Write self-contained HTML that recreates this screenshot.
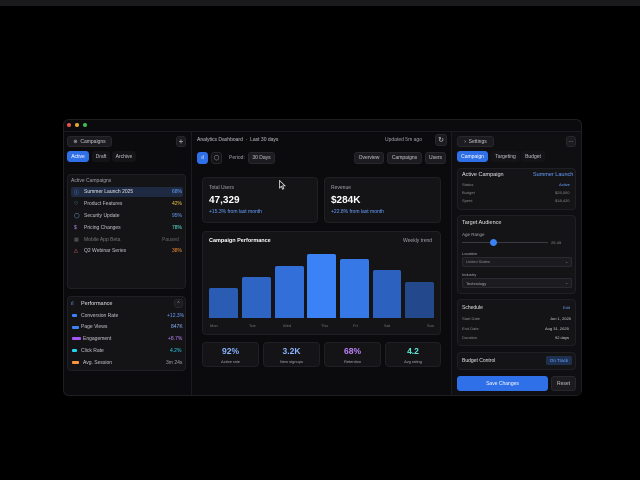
<!DOCTYPE html><html><head><style>
*{margin:0;padding:0;box-sizing:border-box}
body{width:640px;height:480px;background:#000;font-family:"Liberation Sans",sans-serif;color:#c4c4ca;position:relative;overflow:hidden;font-size:5px}
.a{position:absolute}
.win{left:63px;top:119px;width:519px;height:277px;background:#0b0b0d;border:1px solid #1f1f23;border-radius:6px;overflow:hidden}
.card{position:absolute;background:#141417;border:1px solid #1f1f24;border-radius:4px}
.btn{position:absolute;background:#1c1c20;border:1px solid #27272c;border-radius:3px;color:#c4c4ca;font-size:5px;display:flex;align-items:center;justify-content:center}
.blue{background:#2f6fe8;border-color:#2f6fe8;color:#fff}
.t{position:absolute;white-space:nowrap}
.bar{position:absolute;border-radius:2px 2px 0 0}
</style></head><body>
<div class="a" style="left:0;top:0;width:640px;height:6px;background:#1a1a1c"></div>
<div class="a win"></div>
<div class="a" style="left:64px;top:131px;width:517px;height:1px;background:#1c1c20"></div>
<div class="a" style="left:67px;top:123px;width:4px;height:4px;border-radius:50%;background:#e5534b"></div>
<div class="a" style="left:75px;top:123px;width:4px;height:4px;border-radius:50%;background:#e0a82e"></div>
<div class="a" style="left:83px;top:123px;width:4px;height:4px;border-radius:50%;background:#3fb950"></div>
<div class="a" style="left:191px;top:132px;width:1px;height:263px;background:#1c1c20"></div>
<div class="a" style="left:451px;top:132px;width:1px;height:263px;background:#1c1c20"></div>
<div class="a" style="left:452px;top:132px;width:129px;height:263px;background:#0f0f12"></div>

<!-- left -->
<div class="btn" style="left:67px;top:136px;width:45px;height:11px">⊛&nbsp; Campaigns</div>
<div class="btn" style="left:176px;top:136px;width:10px;height:11px;font-size:8px">+</div>
<div class="btn blue" style="left:67px;top:151px;width:22px;height:11px">Active</div>
<div class="btn" style="left:92px;top:151px;width:18px;height:11px;background:#141417;border-color:#141417">Draft</div>
<div class="btn" style="left:112px;top:151px;width:24px;height:11px;background:#141417;border-color:#141417">Archive</div>
<div class="card" style="left:67px;top:174px;width:119px;height:115px"></div>
<div class="t" style="left:71px;top:178px;color:#a1a1aa">Active Campaigns</div>
<div class="a" style="left:71px;top:187px;width:112px;height:10px;background:#1e2a42;border-radius:2px"></div>
<div class="t" style="left:74px;top:189px;color:#6aa0ff">ⓘ</div><div class="t" style="left:84px;top:189px;color:#e4e4e7">Summer Launch 2025</div><div class="t" style="left:172px;top:189px;color:#6aa0ff">68%</div>
<div class="t" style="left:74px;top:201px;color:#5eead4">♡</div><div class="t" style="left:84px;top:201px">Product Features</div><div class="t" style="left:172px;top:201px;color:#f5c542">42%</div>
<div class="t" style="left:74px;top:213px;color:#8ab4ff">◯</div><div class="t" style="left:84px;top:213px">Security Update</div><div class="t" style="left:172px;top:213px;color:#6aa0ff">95%</div>
<div class="t" style="left:74px;top:225px;color:#c084fc">$</div><div class="t" style="left:84px;top:225px">Pricing Changes</div><div class="t" style="left:172px;top:225px;color:#5eead4">78%</div>
<div class="t" style="left:74px;top:237px;color:#666">▦</div><div class="t" style="left:84px;top:237px;color:#777">Mobile App Beta</div><div class="t" style="left:162px;top:237px;color:#666">Paused</div>
<div class="t" style="left:74px;top:248px;color:#f87171">△</div><div class="t" style="left:84px;top:248px">Q2 Webinar Series</div><div class="t" style="left:172px;top:248px;color:#fb923c">38%</div>
<div class="card" style="left:67px;top:296px;width:119px;height:75px"></div>
<div class="t" style="left:71px;top:301px;color:#6aa0ff">ıl</div><div class="t" style="left:81px;top:301px;color:#e4e4e7;font-size:5.5px">Performance</div>
<div class="btn" style="left:174px;top:299px;width:9px;height:9px">⌃</div>
<div class="a" style="left:72px;top:314px;width:5px;height:3px;background:#3b82f6;border-radius:1px"></div><div class="t" style="left:81px;top:313px">Conversion Rate</div><div class="t" style="left:167px;top:313px;color:#6aa0ff">+12.3%</div>
<div class="a" style="left:72px;top:326px;width:7px;height:3px;background:#3b82f6;border-radius:1px"></div><div class="t" style="left:81px;top:324px">Page Views</div><div class="t" style="left:171px;top:324px;color:#8ab4ff">847K</div>
<div class="a" style="left:72px;top:337px;width:9px;height:3px;background:#a855f7;border-radius:1px"></div><div class="t" style="left:83px;top:336px">Engagement</div><div class="t" style="left:168px;top:336px;color:#c084fc">+8.7%</div>
<div class="a" style="left:72px;top:349px;width:5px;height:3px;background:#22d3ee;border-radius:1px"></div><div class="t" style="left:81px;top:348px">Click Rate</div><div class="t" style="left:170px;top:348px;color:#22d3ee">4.2%</div>
<div class="a" style="left:72px;top:361px;width:7px;height:3px;background:#fb923c;border-radius:1px"></div><div class="t" style="left:83px;top:360px">Avg. Session</div><div class="t" style="left:166px;top:360px;color:#a1a1aa">3m 24s</div>

<!-- center -->
<div class="t" style="left:197px;top:137px">Analytics Dashboard &nbsp;·&nbsp; Last 30 days</div>
<div class="t" style="left:385px;top:137px;color:#a1a1aa">Updated 5m ago</div>
<div class="btn" style="left:435px;top:134px;width:12px;height:12px;font-size:7px">↻</div>
<div class="btn blue" style="left:197px;top:152px;width:11px;height:12px">ıl</div>
<div class="btn" style="left:211px;top:152px;width:11px;height:12px;background:#141417">◯</div>
<div class="t" style="left:229px;top:155px;color:#a1a1aa">Period:</div>
<div class="btn" style="left:248px;top:152px;width:27px;height:12px">30 Days</div>
<div class="btn" style="left:354px;top:152px;width:30px;height:12px">Overview</div>
<div class="btn" style="left:387px;top:152px;width:35px;height:12px">Campaigns</div>
<div class="btn" style="left:425px;top:152px;width:21px;height:12px">Users</div>
<div class="card" style="left:202px;top:177px;width:116px;height:46px"></div>
<div class="t" style="left:209px;top:185px;color:#a1a1aa">Total Users</div>
<div class="t" style="left:209px;top:195px;color:#fff;font-size:10px;font-weight:bold">47,329</div>
<div class="t" style="left:209px;top:209px;color:#6aa0ff">+15.3% from last month</div>
<div class="card" style="left:324px;top:177px;width:117px;height:46px"></div>
<div class="t" style="left:331px;top:185px;color:#a1a1aa">Revenue</div>
<div class="t" style="left:331px;top:195px;color:#fff;font-size:10px;font-weight:bold">$284K</div>
<div class="t" style="left:331px;top:209px;color:#6aa0ff">+22.8% from last month</div>
<svg class="a" style="left:279px;top:180px" width="7" height="10" viewBox="0 0 7 10"><path d="M0.5 0.5 L0.5 8 L2.3 6.3 L3.6 9.2 L4.8 8.7 L3.6 5.9 L6 5.9 Z" fill="#111" stroke="#ddd" stroke-width="0.8"/></svg>
<div class="card" style="left:202px;top:231px;width:239px;height:104px"></div>
<div class="t" style="left:209px;top:238px;color:#fff;font-weight:bold;font-size:5.5px">Campaign Performance</div>
<div class="t" style="left:403px;top:238px;color:#a1a1aa">Weekly trend</div>
<div class="bar" style="left:209px;top:288px;width:29px;height:30px;background:#2a5cb4"></div>
<div class="bar" style="left:242px;top:277px;width:29px;height:41px;background:#2e64c4"></div>
<div class="bar" style="left:275px;top:266px;width:29px;height:52px;background:#336fd8"></div>
<div class="bar" style="left:307px;top:254px;width:29px;height:64px;background:#3b82f6"></div>
<div class="bar" style="left:340px;top:259px;width:29px;height:59px;background:#3678e6"></div>
<div class="bar" style="left:373px;top:270px;width:28px;height:48px;background:#2d61bf"></div>
<div class="bar" style="left:405px;top:282px;width:29px;height:36px;background:#24488c"></div>
<div class="t" style="left:210px;top:323px;color:#777;font-size:4px">Mon</div>
<div class="t" style="left:249px;top:323px;color:#777;font-size:4px">Tue</div>
<div class="t" style="left:283px;top:323px;color:#777;font-size:4px">Wed</div>
<div class="t" style="left:321px;top:323px;color:#777;font-size:4px">Thu</div>
<div class="t" style="left:353px;top:323px;color:#777;font-size:4px">Fri</div>
<div class="t" style="left:384px;top:323px;color:#777;font-size:4px">Sat</div>
<div class="t" style="left:427px;top:323px;color:#777;font-size:4px">Sun</div>
<div class="card" style="left:202px;top:342px;width:57px;height:25px"></div>
<div class="card" style="left:263px;top:342px;width:57px;height:25px"></div>
<div class="card" style="left:324px;top:342px;width:57px;height:25px"></div>
<div class="card" style="left:385px;top:342px;width:56px;height:25px"></div>
<div class="t" style="left:202px;top:346px;width:57px;text-align:center;color:#8ab4ff;font-size:8.5px;font-weight:bold">92%</div>
<div class="t" style="left:202px;top:359px;width:57px;text-align:center;color:#a1a1aa;font-size:4px">Active rate</div>
<div class="t" style="left:263px;top:346px;width:57px;text-align:center;color:#8ab4ff;font-size:8.5px;font-weight:bold">3.2K</div>
<div class="t" style="left:263px;top:359px;width:57px;text-align:center;color:#a1a1aa;font-size:4px">New signups</div>
<div class="t" style="left:324px;top:346px;width:57px;text-align:center;color:#c084fc;font-size:8.5px;font-weight:bold">68%</div>
<div class="t" style="left:324px;top:359px;width:57px;text-align:center;color:#a1a1aa;font-size:4px">Retention</div>
<div class="t" style="left:385px;top:346px;width:56px;text-align:center;color:#5eead4;font-size:8.5px;font-weight:bold">4.2</div>
<div class="t" style="left:385px;top:359px;width:56px;text-align:center;color:#a1a1aa;font-size:4px">Avg rating</div>

<!-- right -->
<div class="btn" style="left:457px;top:136px;width:37px;height:11px">›&nbsp; Settings</div>
<div class="btn" style="left:566px;top:136px;width:10px;height:11px">···</div>
<div class="btn blue" style="left:457px;top:151px;width:31px;height:11px">Campaign</div>
<div class="btn" style="left:491px;top:151px;width:29px;height:11px;background:#141417;border-color:#141417">Targeting</div>
<div class="btn" style="left:521px;top:151px;width:24px;height:11px;background:#141417;border-color:#141417">Budget</div>
<div class="card" style="left:457px;top:168px;width:119px;height:42px"></div>
<div class="t" style="left:462px;top:172px;color:#e4e4e7;font-size:5.5px">Active Campaign</div>
<div class="t" style="left:533px;top:172px;color:#6aa0ff;font-size:5.5px">Summer Launch</div>
<div class="t" style="left:462px;top:182px;color:#888;font-size:4px">Status</div><div class="t" style="left:559px;top:182px;color:#6aa0ff;font-size:4px">Active</div>
<div class="t" style="left:462px;top:190px;color:#888;font-size:4px">Budget</div><div class="t" style="left:555px;top:190px;color:#888;font-size:4px">$25,000</div>
<div class="t" style="left:462px;top:198px;color:#888;font-size:4px">Spent</div><div class="t" style="left:555px;top:198px;color:#888;font-size:4px">$18,420</div>
<div class="card" style="left:457px;top:215px;width:119px;height:79px"></div>
<div class="t" style="left:462px;top:220px;color:#e4e4e7;font-size:5.5px">Target Audience</div>
<div class="t" style="left:462px;top:232px;color:#a1a1aa;font-size:4.5px">Age Range</div>
<div class="a" style="left:462px;top:242px;width:86px;height:1px;background:#3a3a40"></div>
<div class="a" style="left:490px;top:239px;width:7px;height:7px;border-radius:50%;background:#3b82f6"></div>
<div class="t" style="left:551px;top:240px;color:#888;font-size:4px">25-45</div>
<div class="t" style="left:462px;top:251px;color:#a1a1aa;font-size:4px">Location</div>
<div class="a" style="left:462px;top:257px;width:110px;height:10px;background:#1c1c20;border:1px solid #2a2a30;border-radius:2px"></div>
<div class="t" style="left:466px;top:259px;color:#888;font-size:4px">United States</div><div class="t" style="left:565px;top:259px;color:#888;font-size:4px">⌄</div>
<div class="t" style="left:462px;top:272px;color:#a1a1aa;font-size:4px">Industry</div>
<div class="a" style="left:462px;top:278px;width:110px;height:10px;background:#1c1c20;border:1px solid #2a2a30;border-radius:2px"></div>
<div class="t" style="left:466px;top:281px;color:#aaa;font-size:4px">Technology</div><div class="t" style="left:565px;top:280px;color:#888;font-size:4px">⌄</div>
<div class="card" style="left:457px;top:299px;width:119px;height:47px"></div>
<div class="t" style="left:462px;top:305px;color:#e4e4e7;font-size:5px">Schedule</div>
<div class="t" style="left:563px;top:305px;color:#6aa0ff;font-size:4px">Edit</div>
<div class="t" style="left:462px;top:316px;color:#888;font-size:4px">Start Date</div><div class="t" style="left:550px;top:316px;color:#ccc;font-size:4px">Jun 1, 2025</div>
<div class="t" style="left:462px;top:326px;color:#888;font-size:4px">End Date</div><div class="t" style="left:545px;top:326px;color:#ccc;font-size:4px">Aug 31, 2025</div>
<div class="t" style="left:462px;top:335px;color:#888;font-size:4px">Duration</div><div class="t" style="left:555px;top:335px;color:#ccc;font-size:4px">92 days</div>
<div class="card" style="left:457px;top:352px;width:119px;height:18px"></div>
<div class="t" style="left:462px;top:358px;color:#e4e4e7;font-size:5px">Budget Control</div>
<div class="a" style="left:546px;top:356px;width:26px;height:9px;background:#1e3050;border-radius:2px;color:#6aa0ff;font-size:4.5px;text-align:center;line-height:9px">On Track</div>
<div class="btn blue" style="left:457px;top:376px;width:91px;height:15px;font-size:5px">Save Changes</div>
<div class="btn" style="left:551px;top:376px;width:25px;height:15px;font-size:5px">Reset</div>
</body></html>
